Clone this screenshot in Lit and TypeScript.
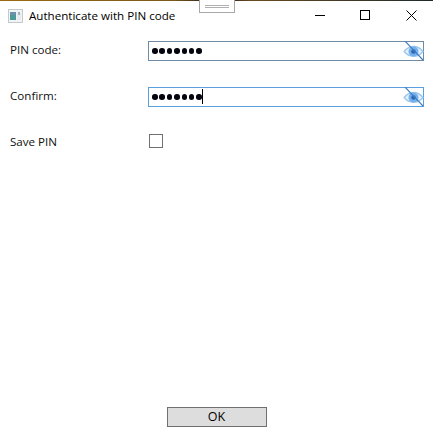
import { LitElement, html, css, svg } from "lit";
import { customElement } from "lit/decorators.js";

const eye = svg`<svg class="eye" width="21" height="20" viewBox="0 0 21 20">
  <path d="M1.2 10.5 C6 4 14.5 3.5 20 10.5 C14.5 17 6 16.5 1.2 10.5Z" fill="#e6f1fb" stroke="#9cc8ef" stroke-width="1.4"/>
  <circle cx="10.5" cy="10.5" r="5" fill="#74b0ee"/>
  <circle cx="10.5" cy="10.5" r="2.3" fill="#2a69b0"/>
  <path d="M2 0 L20 19" stroke="#3f7fc0" stroke-width="1.1" fill="none"/>
</svg>`;

@customElement("app-root")
export class AppRoot extends LitElement {
  static styles = css`
    :host {
      display: block;
      width: 433px;
      height: 441px;
      background: #fff;
      font-family: "Open Sans", "Noto Sans", sans-serif;
      font-size: 11.6px;
      color: #111;
      overflow: hidden;
    }
    .window {
      position: relative;
      height: 441px;
      display: flex;
      flex-direction: column;
      box-sizing: border-box;
    }
    .topline {
      height: 1px;
      flex: none;
      background: linear-gradient(90deg, #9a6a10 0%, #7a5a18 40%, #1c1420 50%, #6a4a20 58%, #1d2a2a 100%);
    }
    .handle {
      position: absolute;
      left: 199px;
      top: 0;
      width: 36px;
      height: 13px;
      box-sizing: border-box;
      background: #fff;
      border: 1px solid #a8a8a8;
      border-top: none;
      display: flex;
      align-items: center;
      justify-content: center;
    }
    .handle i {
      display: block;
      width: 24px;
      height: 3px;
      box-sizing: border-box;
      border-top: 1px solid #b0b0b0;
      border-bottom: 1px solid #b0b0b0;
    }
    .titlebar {
      flex: none;
      height: 29px;
      display: flex;
      align-items: center;
      padding-left: 8px;
      gap: 6px;
    }
    .appicon {
      flex: none;
    }
    .title {
      flex: 1;
      color: #000;
      white-space: nowrap;
    }
    .controls {
      display: flex;
      margin-right: 16px;
    }
    .ctl {
      width: 46px;
      height: 29px;
      display: flex;
      align-items: center;
      justify-content: flex-end;
    }
    .ctl.narrow {
      width: 45px;
    }
    .form {
      flex: 1;
      display: grid;
      grid-template-columns: 138px 276px;
      grid-auto-rows: 46px;
      padding: 11px 0 0 10px;
      align-content: start;
    }
    .label {
      height: 20px;
      line-height: 18px;
    }
    .field {
      width: 276px;
      height: 20px;
      box-sizing: border-box;
      border: 1px solid #6f8ba5;
      display: flex;
      align-items: center;
      justify-content: space-between;
      padding-left: 3px;
      background: #fff;
    }
    .field.focus {
      border-color: #5a9fe0;
    }
    .dots {
      display: flex;
      gap: 1.9px;
      align-items: center;
      height: 16px;
    }
    .dots b {
      display: block;
      width: 5.5px;
      height: 5.5px;
      border-radius: 50%;
      background: #05050f;
    }
    .caret {
      width: 1px;
      height: 15px;
      background: #000;
      margin-left: -1.5px;
      margin-bottom: 2px;
    }
    .eye {
      display: block;
      flex: none;
      margin-right: -1px;
      margin-top: -1px;
    }
    .check {
      display: block;
      width: 14px;
      height: 14px;
      box-sizing: border-box;
      border: 1px solid #707070;
      margin: 1px 0 0 1px;
      background: #fff;
    }
    .ok {
      width: 100px;
      height: 20px;
      box-sizing: border-box;
      background: #dddddd;
      border: 1px solid #707070;
      font: inherit;
      font-size: 12.5px;
      line-height: 16px;
      color: #000;
      padding: 0;
    }
    .footer {
      flex: none;
      display: flex;
      justify-content: center;
      padding-bottom: 14px;
    }
  `;

  private dots() {
    return Array.from({ length: 7 }, () => html`<b></b>`);
  }

  render() {
    return html`
      <div class="window">
        <div class="topline"></div>
        <div class="handle"><i></i></div>
        <div class="titlebar">
          <svg class="appicon" width="15" height="14" viewBox="0 0 15 14">
            <rect x="0.5" y="0.5" width="14" height="13" fill="#f1f3f5" stroke="#c3c9ce" />
            <rect x="2" y="3" width="6" height="8" fill="#4f9a98" />
            <rect x="2" y="3" width="6" height="3" fill="#6f8fab" />
            <rect x="9" y="3" width="4" height="8" fill="#e6ebee" />
            <rect x="10" y="3" width="2" height="3" fill="#a3b4c1" />
          </svg>
          <span class="title">Authenticate with PIN code</span>
          <div class="controls">
            <div class="ctl">
              <svg width="11" height="11" viewBox="0 0 11 11"><path d="M0 5.5H10" stroke="#000" /></svg>
            </div>
            <div class="ctl narrow">
              <svg width="11" height="11" viewBox="0 0 11 11"><rect x="0.5" y="0.5" width="9" height="9" fill="none" stroke="#000" /></svg>
            </div>
            <div class="ctl">
              <svg width="11" height="11" viewBox="0 0 11 11"><path d="M0.5 0.5L10.5 10.5M10.5 0.5L0.5 10.5" stroke="#000" /></svg>
            </div>
          </div>
        </div>
        <div class="form">
          <div class="label">PIN code:</div>
          <div class="field"><span class="dots">${this.dots()}</span>${eye}</div>
          <div class="label">Confirm:</div>
          <div class="field focus">
            <span class="dots">${this.dots()}<span class="caret"></span></span>${eye}
          </div>
          <div class="label">Save PIN</div>
          <div><span class="check"></span></div>
        </div>
        <div class="footer"><button class="ok">OK</button></div>
      </div>
    `;
  }
}
